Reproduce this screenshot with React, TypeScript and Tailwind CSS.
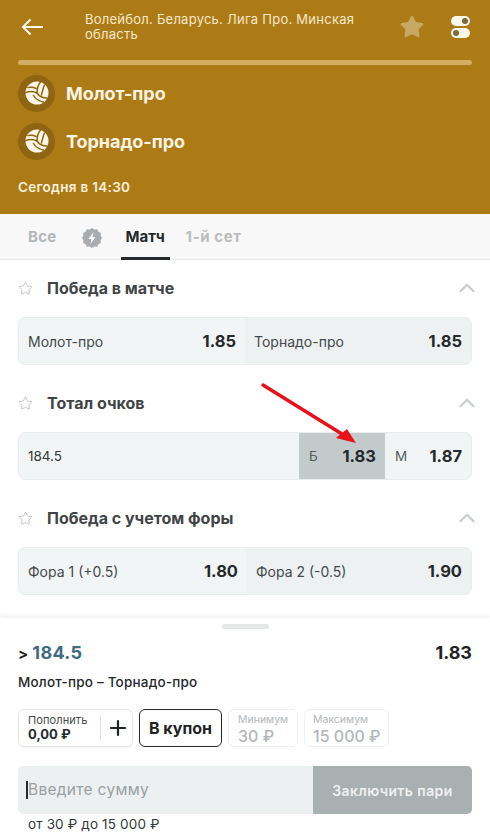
import { ChevronUp, Plus, Star } from "lucide-react";

const font = { fontFamily: "Inter, 'Noto Sans', sans-serif" };

function Ball() {
  return (
    <svg width="24" height="24" viewBox="0 0 24 24" fill="none">
      <circle cx="12" cy="12" r="11.5" fill="#fdf6e6" />
      <g stroke="#8f6412" strokeWidth="1.5" strokeLinecap="round">
        <path d="M12 12C12 8 13 4 15.5 1" />
        <path d="M16.5 14C17.5 10 18 7 19.5 4" />
        <path d="M12 12C8 10 5 10 .8 11.5" />
        <path d="M11 7.5C8.5 6 6 5.8 3 6.5" />
        <path d="M12 12C14 15 17 17 22 17" />
        <path d="M8.5 14.5C10.5 18 14 20 18.5 21" />
      </g>
    </svg>
  );
}

function TeamRow({ name }: { name: string }) {
  return (
    <div className="flex h-[48px] items-center">
      <div className="flex h-[37px] w-[37px] items-center justify-center rounded-full bg-[#8f6412]">
        <Ball />
      </div>
      <span className="ml-[11px] text-[18px] font-bold tracking-[-0.05px] text-[#fbf4e4]">{name}</span>
    </div>
  );
}

function MarketTitle({ title, className }: { title: string; className: string }) {
  return (
    <div className={`flex items-center ${className}`}>
      <Star className="h-[15px] w-[15px] text-[#b4b8ba]" strokeWidth={1.3} />
      <span className="ml-[14px] text-[16px] font-bold text-[#3f4446]">{title}</span>
      <ChevronUp className="ml-auto mr-[-8px] h-[26px] w-[26px] text-[#c9cdcf]" strokeWidth={2} />
    </div>
  );
}

function TwoWay({
  left,
  leftOdd,
  right,
  rightOdd,
  leftWidth,
}: {
  left: string;
  leftOdd: string;
  right: string;
  rightOdd: string;
  leftWidth: string;
}) {
  return (
    <div className="flex h-[48px] overflow-hidden rounded-[7px] border border-[#e9eded] bg-[#f2f5f5]">
      <div className={`flex items-center justify-between pl-[9px] pr-[9px] ${leftWidth}`}>
        <span className="text-[14px] text-[#44494b]">{left}</span>
        <span className="text-[16.5px] font-bold text-[#25292b]">{leftOdd}</span>
      </div>
      <div className="flex flex-1 items-center justify-between bg-[#edf1f1] pl-[9px] pr-[9px]">
        <span className="text-[14px] text-[#44494b]">{right}</span>
        <span className="text-[16.5px] font-bold text-[#25292b]">{rightOdd}</span>
      </div>
    </div>
  );
}

export default function App() {
  return (
    <div className="relative h-[839px] w-[490px] overflow-hidden bg-white" style={font}>
      {/* header */}
      <div className="h-[214px] bg-[#ad7b15] px-[18px]">
        <div className="flex h-[60px] items-start">
          <svg className="ml-[3px] mt-[18px]" width="22" height="18" viewBox="0 0 22 18" fill="none" stroke="#fdf8ec" strokeWidth="2">
            <path d="M22 9H2M9.5 1.5L2 9l7.5 7.5" />
          </svg>
          <p className="ml-[42px] mt-[12px] w-[300px] text-[13px] leading-[14.5px] tracking-[0.25px] text-[#f6e9cc]">
            Волейбол. Беларусь. Лига Про. Минская область
          </p>
          <Star className="ml-[14px] mt-[14px] h-[26px] w-[26px] fill-[#c9a866] text-[#c9a866]" strokeWidth={1} />
          <div className="ml-[26px] mt-[16px] flex flex-col gap-[2px]">
            <div className="flex h-[10px] w-[19px] items-center justify-end rounded-full bg-[#fdf8ec] pr-[2px]">
              <div className="h-[6px] w-[6px] rounded-full bg-[#7d6a3c]" />
            </div>
            <div className="flex h-[10px] w-[19px] items-center rounded-full bg-[#fdf8ec] pl-[2px]">
              <div className="h-[6px] w-[6px] rounded-full bg-[#7d6a3c]" />
            </div>
          </div>
        </div>
        <div className="h-[5px] rounded-full bg-[#d4ad62]" />
        <div className="mt-[4px]">
          <TeamRow name="Молот-про" />
          <TeamRow name="Торнадо-про" />
        </div>
        <p className="mt-[14px] text-[13.5px] font-semibold leading-[16px] tracking-[0.3px] text-[#f8efdb]">Сегодня в 14:30</p>
      </div>

      {/* tabs */}
      <div className="flex h-[46px] items-stretch border-b border-[#e6e8e8] bg-[#f8f8f8] pl-[28px] text-[15px] font-bold">
        <span className="flex items-center pt-[2px] tracking-[0.3px] text-[#b3b7b9]">Все</span>
        <span className="ml-[25px] flex items-center pt-[2px]">
          <svg width="20" height="20" viewBox="0 0 20 20">
            <path
              d="M10 0l2.4 1.5 2.8-.3 1.2 2.5 2.5 1.2-.3 2.8L20 10l-1.4 2.3.3 2.8-2.5 1.2-1.2 2.5-2.8-.3L10 20l-2.4-1.5-2.8.3-1.2-2.5-2.5-1.2.3-2.8L0 10l1.4-2.3-.3-2.8 2.5-1.2 1.2-2.5 2.8.3z"
              fill="#a9adaf"
            />
            <path d="M11.5 4L6.5 11h3l-1 5 5-7h-3z" fill="#f8f8f8" />
          </svg>
        </span>
        <span className="relative ml-[19px] flex w-[49px] items-center justify-center pt-[2px] text-[#25292b]">
          Матч
          <span className="absolute bottom-[-1px] left-0 right-0 h-[3px] bg-[#25292b]" />
        </span>
        <span className="ml-[16px] flex items-center pt-[2px] tracking-[0.6px] text-[#b9bdbf]">1-й сет</span>
      </div>

      {/* markets */}
      <div className="px-[18px]">
        <MarketTitle title="Победа в матче" className="mt-[16px] h-[24px]" />
        <div className="mt-[17px]">
          <TwoWay left="Молот-про" leftOdd="1.85" right="Торнадо-про" rightOdd="1.85" leftWidth="w-[226px]" />
        </div>

        <MarketTitle title="Тотал очков" className="mt-[26px] h-[24px]" />
        <div className="mt-[17px] flex h-[48px] overflow-hidden rounded-[7px] border border-[#e9eded] bg-[#f2f5f5]">
          <div className="flex flex-1 items-center pl-[9px] text-[13.5px] text-[#33383a]">184.5</div>
          <div className="flex w-[86px] items-center justify-between bg-[#c3cacb] pl-[10px] pr-[9px]">
            <span className="text-[13.5px] text-[#555c5e]">Б</span>
            <span className="text-[16.5px] font-bold text-[#25292b]">1.83</span>
          </div>
          <div className="flex w-[86px] items-center justify-between pl-[10px] pr-[9px]">
            <span className="text-[13.5px] text-[#555c5e]">М</span>
            <span className="text-[16.5px] font-bold text-[#25292b]">1.87</span>
          </div>
        </div>

        <MarketTitle title="Победа с учетом форы" className="mt-[26px] h-[24px]" />
        <div className="mt-[17px]">
          <TwoWay left="Фора 1 (+0.5)" leftOdd="1.80" right="Фора 2 (-0.5)" rightOdd="1.90" leftWidth="w-[228px]" />
        </div>
      </div>

      {/* bet slip */}
      <div className="mt-[23px] h-[219px] bg-white px-[18px] shadow-[0_-3px_4px_rgba(0,0,0,0.05)]">
        <div className="flex justify-center pt-[6px]">
          <div className="h-[5px] w-[47px] rounded-full bg-[#e7e9e9]" />
        </div>
        <div className="mt-[10px] flex items-center justify-between">
          <span className="text-[18px] font-bold tracking-[0.3px] text-[#1f2325]">
            <span className="text-[15px]">&gt; </span>
            <span className="text-[#3f6c80]">184.5</span>
          </span>
          <span className="text-[18px] font-bold text-[#1f2325]">1.83</span>
        </div>
        <p className="mt-[7px] text-[13.5px] font-medium leading-[18px] tracking-[0.2px] text-[#25292b]">Молот-про – Торнадо-про</p>

        <div className="mt-[18px] flex h-[38px] gap-[6px]">
          <div className="flex w-[115px] items-center rounded-[6px] border border-[#e6e8e8] shadow-[0_1px_2px_rgba(0,0,0,0.06)]">
            <div className="w-[81px] pl-[9px] leading-none">
              <div className="text-[11px] tracking-[0.1px] text-[#44494b]">Пополнить</div>
              <div className="mt-[2px] text-[13px] font-bold text-[#25292b]">0,00 ₽</div>
            </div>
            <div className="h-[24px] w-px bg-[#e3e5e5]" />
            <Plus className="ml-[5px] h-[24px] w-[24px] text-[#1f2325]" strokeWidth={2.2} />
          </div>
          <div className="flex w-[83px] items-center justify-center rounded-[6px] border-[1.5px] border-[#25292b] text-[16px] font-bold text-[#1f2325]">
            В купон
          </div>
          <div className="w-[70px] rounded-[6px] border border-[#eff1f1] pl-[9px] pt-[5px] leading-none">
            <div className="text-[10.5px] text-[#b3b7b9]">Минимум</div>
            <div className="mt-[2px] text-[16px] font-medium text-[#b3b7b9]">30 ₽</div>
          </div>
          <div className="w-[85px] rounded-[6px] border border-[#eff1f1] pl-[8px] pt-[5px] leading-none">
            <div className="text-[10.5px] text-[#b3b7b9]">Максимум</div>
            <div className="mt-[2px] whitespace-nowrap text-[16px] font-medium text-[#b3b7b9]">15 000 ₽</div>
          </div>
        </div>

        <div className="mt-[19px] flex h-[48px] overflow-hidden rounded-[5px] bg-[#edf0f0]">
          <div className="flex flex-1 items-center pl-[8px]">
            <div className="h-[18px] w-[2px] bg-[#25292b]" />
            <span className="text-[15.5px] tracking-[0.3px] text-[#9aa0a2]">Введите сумму</span>
          </div>
          <div className="flex w-[159px] items-center justify-center bg-[#a8b0b1] text-[14px] font-semibold tracking-[0.4px] text-[#eef1f1]">
            Заключить пари
          </div>
        </div>
        <p className="mt-[1px] pl-[10px] text-[13.5px] leading-[18px] tracking-[0.15px] text-[#33383a]">от 30 ₽ до 15 000 ₽</p>
      </div>

      {/* red annotation arrow */}
      <svg className="absolute left-[255px] top-[378px]" width="110" height="72" viewBox="0 0 110 72">
        <path d="M8 7L87 56" stroke="#e8101a" strokeWidth="3.5" fill="none" strokeLinecap="round" />
        <path d="M101 65L81 60L92 51Z" fill="#e8101a" />
      </svg>
    </div>
  );
}
